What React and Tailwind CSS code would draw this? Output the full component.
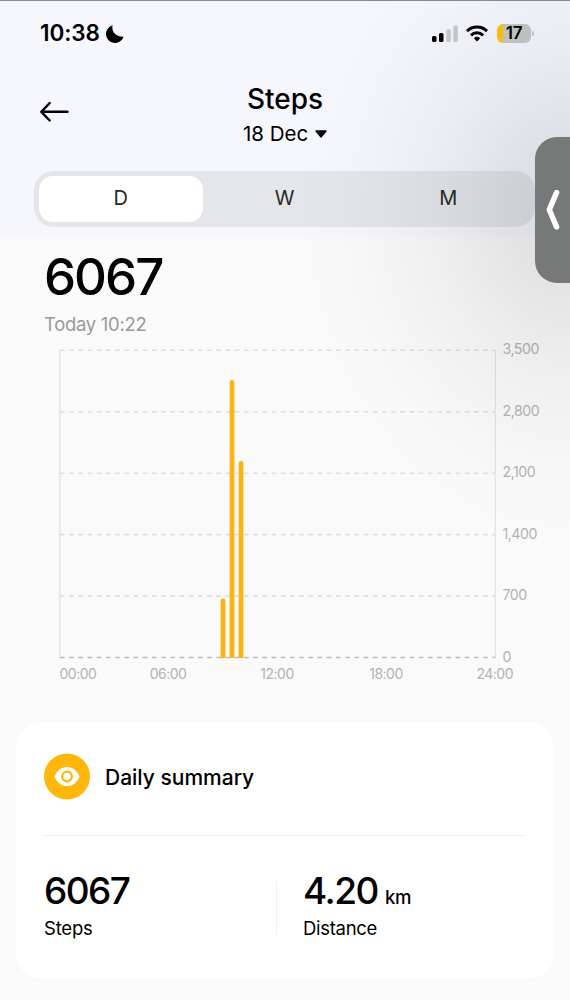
import { useState } from 'react';

const ranges = ['D', 'W', 'M'];
const yLabels = ['3,500', '2,800', '2,100', '1,400', '700', '0'];
const xLabels = [
  { text: '00:00', x: 59.5, anchor: 'start' },
  { text: '06:00', x: 168, anchor: 'middle' },
  { text: '12:00', x: 277, anchor: 'middle' },
  { text: '18:00', x: 386, anchor: 'middle' },
  { text: '24:00', x: 494.7, anchor: 'middle' },
];
const bars = [
  { x: 223, top: 601 },
  { x: 232, top: 382.5 },
  { x: 241, top: 463.5 },
];

function StatusBar() {
  return (
    <div className="flex h-[65px] items-center justify-between pl-10 pr-9">
      <div className="flex items-center gap-[6px]">
        <span className="text-[22.5px] leading-none font-semibold tracking-[-0.1px]">10:38</span>
        <svg width="18" height="18" viewBox="0 0 18 18">
          <path d="M6.6 .3C5.2 6.8 9.7 12 17.6 11.7A9 9 0 1 1 6.6 .3Z" fill="#000" />
        </svg>
      </div>
      <div className="flex items-center">
        <svg width="28" height="18" viewBox="0 0 28 18">
          <rect x="1" y="11" width="4.5" height="6" rx="1.5" />
          <rect x="8" y="8" width="4.5" height="9" rx="1.5" />
          <rect x="15.3" y="4.2" width="4.5" height="12.8" rx="1.5" fill="#c9cacb" />
          <rect x="22.3" y=".5" width="4.5" height="16.5" rx="1.5" fill="#c9cacb" />
        </svg>
        <svg className="ml-[7px]" width="22" height="17" viewBox="0 0 22 17" fill="none" stroke="#000" strokeWidth="3">
          <path d="M1 6.1a14.4 14.4 0 0 1 20 0" />
          <path d="M4.9 10.3a8.8 8.8 0 0 1 12.2 0" />
          <path d="M7.8 13.3a4.7 4.7 0 0 1 6.4 0L11 16.6Z" fill="#000" stroke="none" />
        </svg>
        <div className="ml-[9px] flex h-[19px] w-[34px] items-center justify-center rounded-[6px] bg-linear-to-r from-[#ffc60e] from-19% to-[#c6c7c7] to-19% text-[17px] leading-none font-semibold tracking-[-0.2px]">
          17
        </div>
        <div className="ml-[1px] h-[5px] w-[2px] rounded-r-full bg-[#c6c7c8]" />
      </div>
    </div>
  );
}

function Header() {
  return (
    <div className="flex h-[105px] items-start pl-10">
      <svg className="mt-[35px]" width="29" height="22" viewBox="0 0 29 22" fill="none" stroke="#000" strokeWidth="2.4" strokeLinecap="round" strokeLinejoin="round">
        <path d="M9.7 2 1.3 10.8l8.4 8.7M1.5 10.8H27.5" />
      </svg>
      <div className="mr-[69px] flex flex-1 flex-col items-center pt-[15px]">
        <h1 className="text-[28px] leading-[36px] font-medium">Steps</h1>
        <div className="flex items-center gap-[7px] text-[20.5px] leading-[34px]">
          <span>18 Dec</span>
          <svg width="12" height="9" viewBox="0 0 12 9">
            <path d="M1 1h10L6 7Z" stroke="#000" strokeWidth="1.3" strokeLinejoin="round" />
          </svg>
        </div>
      </div>
    </div>
  );
}

function Chart() {
  return (
    <svg className="block" width="570" height="356" viewBox="0 336 570 356">
      {yLabels.map((label, i) => {
        const y = 350.3 + i * 61.45;
        return (
          <g key={label}>
            <line x1="60" x2="495" y1={y} y2={y} stroke={i === 5 ? '#bcbcbc' : '#dedede'} strokeWidth="1.6" strokeDasharray="4.6 4.6" />
            <text x="502.5" y={y + 4} fontSize="14.2" letterSpacing="-0.5" fill="#b3b3b3">{label}</text>
          </g>
        );
      })}
      <path d="M59.8 350V658M495.3 350V658" stroke="#e1e1e1" strokeWidth="1.2" />
      {bars.map((bar) => (
        <path key={bar.x} d={`M${bar.x - 2.4} 658V${bar.top}a2.4 2.4 0 0 1 4.8 0V658Z`} fill="#fab414" />
      ))}
      {xLabels.map((label) => (
        <text key={label.text} x={label.x} y="679.3" fontSize="14" letterSpacing="-0.5" fill="#b3b3b3" textAnchor={label.anchor}>{label.text}</text>
      ))}
    </svg>
  );
}

function Summary() {
  return (
    <div className="mx-4 mt-[30px] h-[257px] rounded-[26px] bg-white px-7 pt-8">
      <div className="flex h-[46px] items-center gap-[15px]">
        <svg className="overflow-visible" width="46" height="46" viewBox="0 0 46 46">
          <circle cx="23" cy="22.5" r="23" fill="#ffb70b" />
          <path d="M10.4 22.5C13 16.5 17.4 12.9 23 12.9S33 16.5 35.6 22.5C33 28.5 28.6 32.1 23 32.1S13 28.5 10.4 22.5Z" fill="#fff" />
          <circle cx="23" cy="22.5" r="4.8" fill="#fff" stroke="#ffb70b" strokeWidth="2.2" />
        </svg>
        <span className="text-[21px] leading-none font-medium">Daily summary</span>
      </div>
      <div className="mr-[1px] mt-[35px] h-px bg-[#ededed]" />
      <div className="flex pt-[35px]">
        <div className="w-[232px]">
          <div className="text-[37px] leading-[40px] font-medium tracking-[-1.6px]">6067</div>
          <div className="text-[18.5px] leading-[34px] tracking-[-0.2px]">Steps</div>
        </div>
        <div className="mt-[10px] h-[54px] w-px bg-[#f0f0f0]" />
        <div className="pl-[26px]">
          <div className="flex h-[40px] items-baseline gap-[7px] leading-[40px] font-medium">
            <span className="text-[37px] tracking-[-1.5px]">4.20</span>
            <span className="text-[18.5px] tracking-[-0.3px]">km</span>
          </div>
          <div className="text-[18.5px] leading-[34px] tracking-[-0.3px]">Distance</div>
        </div>
      </div>
    </div>
  );
}

function App() {
  const [range, setRange] = useState('D');

  return (
    <div className="relative h-[1000px] w-[570px] overflow-hidden bg-[#fafafa] font-['Inter',sans-serif] text-black">
      <div className="h-[237px] border-t border-[#8d8992] bg-[#f6f7fd]">
        <StatusBar />
        <Header />
        <div className="ml-[34px] flex h-[56px] w-[501px] rounded-[20px] bg-[#e5e6ea] p-[5px]">
          {ranges.map((r) => (
            <button
              key={r}
              onClick={() => setRange(r)}
              className={`flex-1 rounded-[14px] pb-[2px] text-[20px] text-[#292929] ${range === r ? 'bg-white' : ''}`}
            >
              {r}
            </button>
          ))}
        </div>
      </div>

      <div className="h-[99px] pl-[44px] pt-[14px]">
        <div className="text-[51px] leading-[51px] font-medium tracking-[-2px]">6067</div>
        <div className="pt-[7px] text-[18.5px] leading-[31px] tracking-[-0.3px] text-[#999]">Today 10:22</div>
      </div>
      <Chart />
      <Summary />

      {/* soft shade cast by the side handle */}
      <div className="pointer-events-none absolute top-0 right-0 h-[560px] w-[285px] bg-[radial-gradient(ellipse_280px_340px_at_100%_210px,rgba(4,4,0,0.12)_0%,rgba(4,4,0,0.09)_22%,rgba(4,4,0,0.045)_50%,rgba(4,4,0,0.012)_78%,transparent_100%)]" />
      <div className="absolute top-[137px] right-0 flex h-[146px] w-[35px] items-center rounded-l-[22px] bg-[#777978] pl-[11px]">
        <svg width="15" height="42" viewBox="0 0 15 42" fill="none" stroke="#fff" strokeWidth="5.5" strokeLinecap="round" strokeLinejoin="round">
          <path d="M10.6 3.5 3.3 20.8 10.6 38" />
        </svg>
      </div>
    </div>
  );
}

export default App;
